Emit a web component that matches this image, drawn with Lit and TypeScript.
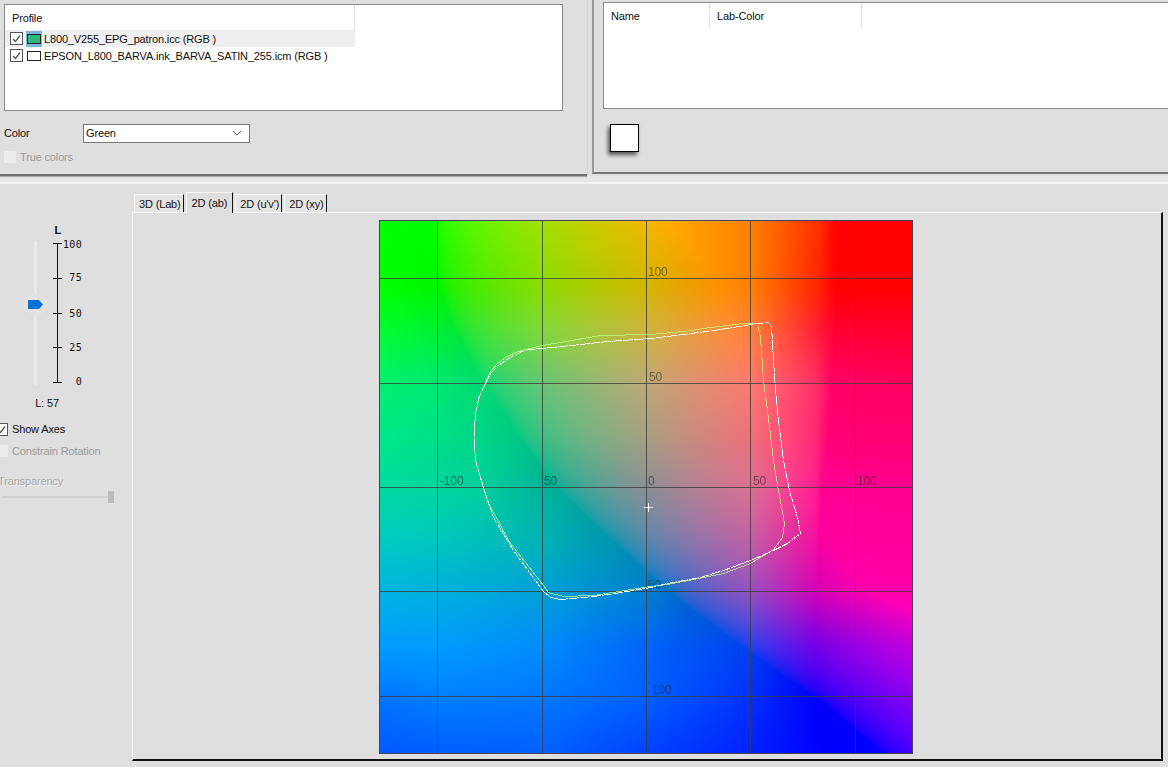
import { LitElement, html, css, svg } from "lit";
import { customElement } from "lit/decorators.js";

const PX = 532;
const OX = 380;
const OY = 221;
const pts = (a: number[][]) => a.map(([x, y]) => `${x - OX + 0.5},${y - OY + 0.5}`).join(" ");

const WHITE = [[475,460],[473.500,437],[475,413],[478,398],[485,383],[490,373],[498,365],[508,358],[520,351.500],[528,349],[542,348],[580,344],[607,341],[650,338],[683,334],[720,329],[757,323],[768,322],[771,325],[773,360],[775,390],[778,420],[783,460],[789,490],[797,517],[800,533],[787,543],[773,550],[750,560],[723,570],[700,577],[667,583],[650,587],[615,593],[593,596],[560,599],[550,597],[543,591],[513,550],[493,517],[483,488],[475,460]];
const GREEN = [[475,460],[473.500,437],[475,413],[479,396],[485,382],[490,371],[497,363],[505,357],[515,352],[525,349],[542,345],[583,338],[600,335],[650,334],[683,331],[710,327],[743,323],[757,323],[760,337],[763,380],[767,410],[773,460],[778,490],[784,523],[782,537],[773,549],[750,563],[723,573],[693,579],[667,584],[650,586],[593,595],[563,596],[548,592],[543,585],[510,543],[488,503],[483,487],[475,460]];

const VLINES = [437, 542, 646, 750, 855];
const HLINES = [278, 383, 487, 591, 696];
const LABELS: [number, number, string][] = [
  [648, 276, "100"], [649, 381, "50"], [440, 485, "-100"], [544, 485, "50"], [648, 485, "0"],
  [753, 485, "50"], [857, 485, "100"], [648, 589, "50"], [652, 694, "100"],
];
const TICKS: [number, number, string][] = [[243, 248, "100"], [278, 281, "75"], [313, 317, "50"], [347, 351, "25"], [382, 385, "0"]];

type Tbl = [number, number][];
function lerp(t: Tbl, x: number) {
  if (x <= t[0][0]) return t[0][1];
  for (let i = 1; i < t.length; i++) {
    if (x <= t[i][0]) {
      const [a, b] = [t[i - 1], t[i]];
      return a[1] + ((b[1] - a[1]) * (x - a[0])) / (b[0] - a[0]);
    }
  }
  return t[t.length - 1][1];
}

const R_CREASE: Tbl = [[0,150],[170,170],[300,210],[470,300],[620,400],[784,520],[900,640],[1030,780],[1130,900],[1270,1090],[1400,1280],[1568,1480]];
const R_WIDTH: Tbl = [[0,700],[170,830],[478,790],[784,730],[930,650],[1090,590],[1250,800],[1568,800]];
const G_ROWS: [number, Tbl][] = [
  [0, [[0,255],[150,255],[300,245],[480,224],[784,184],[1090,128],[1290,48],[1340,0]]],
  [320, [[0,255],[170,240],[250,230],[480,216],[784,180],[1090,128],[1280,32],[1340,0]]],
  [478, [[0,240],[170,232],[300,216],[480,196],[784,168],[1090,120],[1280,48],[1330,0]]],
  [630, [[0,232],[170,224],[350,208],[480,192],[784,160],[1090,112],[1280,40],[1320,0]]],
  [784, [[0,220],[300,208],[500,176],[784,143],[1090,112],[1280,30],[1300,0]]],
  [930, [[0,205],[170,200],[480,180],[600,160],[784,136],[1090,96],[1280,16],[1290,0]]],
  [1090, [[0,180],[170,176],[480,160],[784,128],[900,101],[1090,80],[1285,0]]],
  [1250, [[0,156],[170,156],[480,140],[784,100],[1090,64],[1280,0]]],
  [1400, [[0,116],[170,128],[480,120],[784,96],[1090,48],[1280,0]]],
  [1568, [[0,88],[480,96],[784,64],[1090,32],[1300,0]]],
];
const B_ROWS: [number, Tbl][] = [
  [0, [[0,0]]],
  [190, [[0,0]]],
  [320, [[0,48],[784,64],[1500,48]]],
  [478, [[0,112],[784,120],[1500,96]]],
  [630, [[0,136],[784,128],[1500,112]]],
  [784, [[0,160],[784,149],[1500,144]]],
  [930, [[0,192],[784,172],[1500,152]]],
  [1090, [[0,226],[784,208],[1500,172]]],
  [1250, [[0,255],[784,248],[1500,225]]],
  [1400, [[0,255],[784,255],[1500,245]]],
  [1568, [[0,255],[1500,255]]],
];
function rows(t: [number, Tbl][], X: number, Y: number) {
  for (let i = 1; i < t.length; i++) {
    if (Y <= t[i][0]) {
      const f = (Y - t[i - 1][0]) / (t[i][0] - t[i - 1][0]);
      return lerp(t[i - 1][1], X) * (1 - f) + lerp(t[i][1], X) * f;
    }
  }
  return lerp(t[t.length - 1][1], X);
}
function plotColor(X: number, Y: number): [number, number, number] {
  const dx = X - lerp(R_CREASE, Y);
  const r = dx <= 0 ? 0 : 255 * Math.min(1, Math.pow(dx / lerp(R_WIDTH, Y), 0.6));
  return [r, rows(G_ROWS, X, Y), rows(B_ROWS, X, Y)];
}

@customElement("app-root")
export class AppRoot extends LitElement {
  static styles = css`
    :host { display: block; width: 1168px; height: 767px; overflow: hidden; background: #dfdfdf;
      font: 11px/14px "Liberation Sans", Arial, sans-serif; letter-spacing: -0.15px; color: #111; }
    .top { display: flex; height: 176px; }
    .pleft { width: 587px; box-sizing: border-box; padding: 4px 24px 0 4px; border-bottom: 2px solid #6e6e6e; box-shadow: 0 1px 1px #aaa; flex: none; }
    .pright { flex: 1; margin-left: 5px; box-sizing: border-box; height: 174px; padding: 2px 0 0 9px;
      border-left: 2px solid #999; border-bottom: 2px solid #777; }
    .list { background: #fff; border: 1px solid #8a8a8a; box-sizing: border-box; height: 107px; }
    .rlist { border-right: none; }
    .hdr { height: 25px; display: flex; }
    .hcell { box-sizing: border-box; border-right: 1px solid #e4e4e4; padding: 6px 0 0 7px; }
    .row { display: flex; align-items: center; height: 17px; width: 350px; padding-left: 5px; box-sizing: border-box; white-space: nowrap; }
    .row.sel { background: #efefef; }
    .cb { width: 11px; height: 11px; border: 1px solid #555; background: #fff; box-sizing: content-box; flex: none; display: block; }
    .swatch { width: 16px; height: 16px; margin-left: 3px; margin-right: 2px; display: flex; align-items: center; justify-content: center; flex: none; }
    .swatch.hl { background: #7db4e2; }
    .swatch i { display: block; width: 12px; height: 8px; border: 1px solid #222; background: #fff; }
    .swatch.hl i { background: #2fb880; }
    .color { display: flex; align-items: center; margin-top: 12px; height: 20px; }
    .color span { width: 79px; padding-bottom: 1px; }
    .select { width: 167px; height: 19px; box-sizing: border-box; border: 1px solid #777; background: #fff; display: flex;
      align-items: center; justify-content: space-between; padding: 0 7px 1px 2px; }
    .check { display: flex; align-items: center; gap: 4px; height: 14px; white-space: nowrap; }
    .dis { color: #9b9b9b; }
    .dbox { width: 12px; height: 12px; background: #ededed; flex: none; }
    .true { margin-top: 7px; }
    .btn { width: 29px; height: 28px; box-sizing: border-box; margin: 15px 0 0 7px; border: 1px solid #000; background: #fff;
      box-shadow: -2px 3px 4px #555; }

    .gap { height: 6px; background: #e6e6e6; }
    .bottom { border-top: 2px solid #f4f4f4; display: flex; height: 583px; }
    .side { width: 132px; flex: none; box-sizing: border-box; display: flex; flex-direction: column; overflow: hidden; }
    .ruler { display: block; margin-top: 40px; }
    .ruler text { font: 10px "DejaVu Sans Mono", monospace; fill: #111; text-anchor: end; letter-spacing: 0.3px; }
    .ruler .lname { font: bold 11px "Liberation Sans", sans-serif; text-anchor: middle; }
    .lval { margin-top: 6px; width: 94px; text-align: center; }
    .axes { margin-top: 12px; margin-left: -5px; }
    .cons { margin-top: 8px; }
    .trans { margin: 16px 0 0 -2px; color: #a8a8a8; text-shadow: 1px 1px 0 #f0f0f0; }
    .tslider { position: relative; height: 12px; margin: 3px 0 0 2px; width: 112px; }
    .tslider::before { content: ""; position: absolute; left: 0; right: 4px; top: 5px; height: 2px; background: #d0d0d0; }
    .tslider b { position: absolute; right: 0; top: 0; width: 6px; height: 12px; background: #bcbcbc; }
    .main { flex: 1; padding-top: 8px; display: flex; flex-direction: column; padding-right: 5px; }
    .tabs { display: flex; align-items: flex-end; height: 20px; padding-left: 2px; gap: 2px; }
    .tab { height: 18px; box-sizing: border-box; padding: 2px 2px 0 4px; background: #e4e4e4; border-top: 1px solid #f8f8f8;
      border-left: 1px solid #f8f8f8; border-right: 1px solid #111; white-space: nowrap; }
    .tab.on { height: 21px; padding: 3px 5px 0 5px; background: #dfdfdf; margin-bottom: -1px; position: relative; z-index: 1; }
    .page { height: 549px; box-sizing: border-box; border: 1px solid #111; border-top-color: #f8f8f8; border-left-color: #f8f8f8;
      border-width: 1px 2px 2px 1px; padding: 8px 0 0 247px; }
    .plot { position: relative; width: 532px; height: 532px; outline: 1px solid #445; }
    canvas { display: block; }
    .plot svg { position: absolute; left: 0; top: 0; }
    .plot text { font: 12px "Liberation Sans", sans-serif; fill: rgba(30,30,30,.55); }
    .curve { shape-rendering: crispEdges; fill: none; }
    .dash { stroke-dasharray: 10 1; }
  `;

  firstUpdated() {
    const c = this.renderRoot.querySelector("canvas") as HTMLCanvasElement;
    const ctx = c.getContext("2d")!;
    const img = ctx.createImageData(PX, PX);
    const k = 1568 / 533;
    for (let y = 0; y < PX; y++) {
      for (let x = 0; x < PX; x++) {
        const [r, g, b] = plotColor(x * k, y * k);
        const i = (y * PX + x) * 4;
        img.data[i] = r; img.data[i + 1] = g; img.data[i + 2] = b; img.data[i + 3] = 255;
      }
    }
    ctx.putImageData(img, 0, 0);
  }

  private box(checked: boolean) {
    return html`<svg class="cb" viewBox="0 0 11 11">${checked ? svg`<path d="M2 6l2.500 2.500L9 2.500" fill="none" stroke="#555" stroke-width="1.300"/>` : ""}</svg>`;
  }

  render() {
    return html`
      <div class="top">
        <div class="pleft">
          <div class="list">
            <div class="hdr"><div class="hcell" style="width:350px">Profile</div></div>
            <div class="row sel">${this.box(true)}<span class="swatch hl"><i></i></span>L800_V255_EPG_patron.icc (RGB )</div>
            <div class="row">${this.box(true)}<span class="swatch"><i></i></span>EPSON_L800_BARVA.ink_BARVA_SATIN_255.icm (RGB )</div>
          </div>
          <div class="color"><span>Color</span>
            <div class="select">Green
              <svg width="10" height="6" viewBox="0 0 10 6"><path d="M1 1l4 4 4-4" fill="none" stroke="#555"/></svg>
            </div>
          </div>
          <div class="check dis true"><div class="dbox"></div>True colors</div>
        </div>
        <div class="pright">
          <div class="list rlist">
            <div class="hdr">
              <div class="hcell" style="width:106px">Name</div>
              <div class="hcell" style="width:152px">Lab-Color</div>
            </div>
          </div>
          <div class="btn"></div>
        </div>
      </div>
      <div class="gap"></div>
      <div class="bottom">
        <div class="side">
          <svg class="ruler" width="132" height="166" viewBox="0 224 132 166">
            <rect x="34" y="241" width="3" height="144" fill="#e9e9e9"/>
            <ellipse cx="35.500" cy="304.500" rx="12" ry="11" fill="#e3e2e1"/>
            <path d="M28 300h11l4 4.500-4 4.500H28z" fill="#0a72d4"/>
            <text class="lname" x="58" y="234">L</text>
            <path d="M57.500 243V382M53 243.500H62M53 278.500H62M53 313.500H62M53 347.500H62M53 382.500H62" stroke="#111" fill="none"/>
            ${TICKS.map(([, ty, t]) => svg`<text x="82" y="${ty}">${t}</text>`)}
          </svg>
          <div class="lval">L: 57</div>
          <div class="check axes">${this.box(true)}Show Axes</div>
          <div class="check dis cons"><div class="dbox" style="margin-left:-4px"></div>Constrain Rotation</div>
          <div class="trans">Transparency</div>
          <div class="tslider"><b></b></div>
        </div>
        <div class="main">
          <div class="tabs">
            <div class="tab">3D (Lab)</div>
            <div class="tab on">2D (ab)</div>
            <div class="tab">2D (u'v')</div>
            <div class="tab">2D (xy)</div>
          </div>
          <div class="page">
            <div class="plot">
              <canvas width="532" height="532"></canvas>
              <svg width="532" height="532" viewBox="0 0 532 532">
                ${VLINES.map((x) => svg`<line x1="${x - OX + 0.5}" x2="${x - OX + 0.5}" y1="0" y2="532" stroke="rgba(60,60,60,.8)"/>`)}
                ${HLINES.map((y) => svg`<line y1="${y - OY + 0.5}" y2="${y - OY + 0.5}" x1="0" x2="532" stroke="rgba(60,60,60,.8)"/>`)}
                ${LABELS.map(([x, y, t]) => svg`<text x="${x - OX}" y="${y - OY}">${t}</text>`)}
                <polyline class="curve" points="${pts(GREEN)}" stroke="rgba(190,255,130,.75)"/>
                <polyline class="curve dash" points="${pts(WHITE)}" stroke="#fff"/>
                <path d="M${644 - OX} ${507.500 - OY}h9M${648.500 - OX} ${503 - OY}v9" stroke="#fff" fill="none"/>
              </svg>
            </div>
          </div>
        </div>
      </div>
    `;
  }
}
